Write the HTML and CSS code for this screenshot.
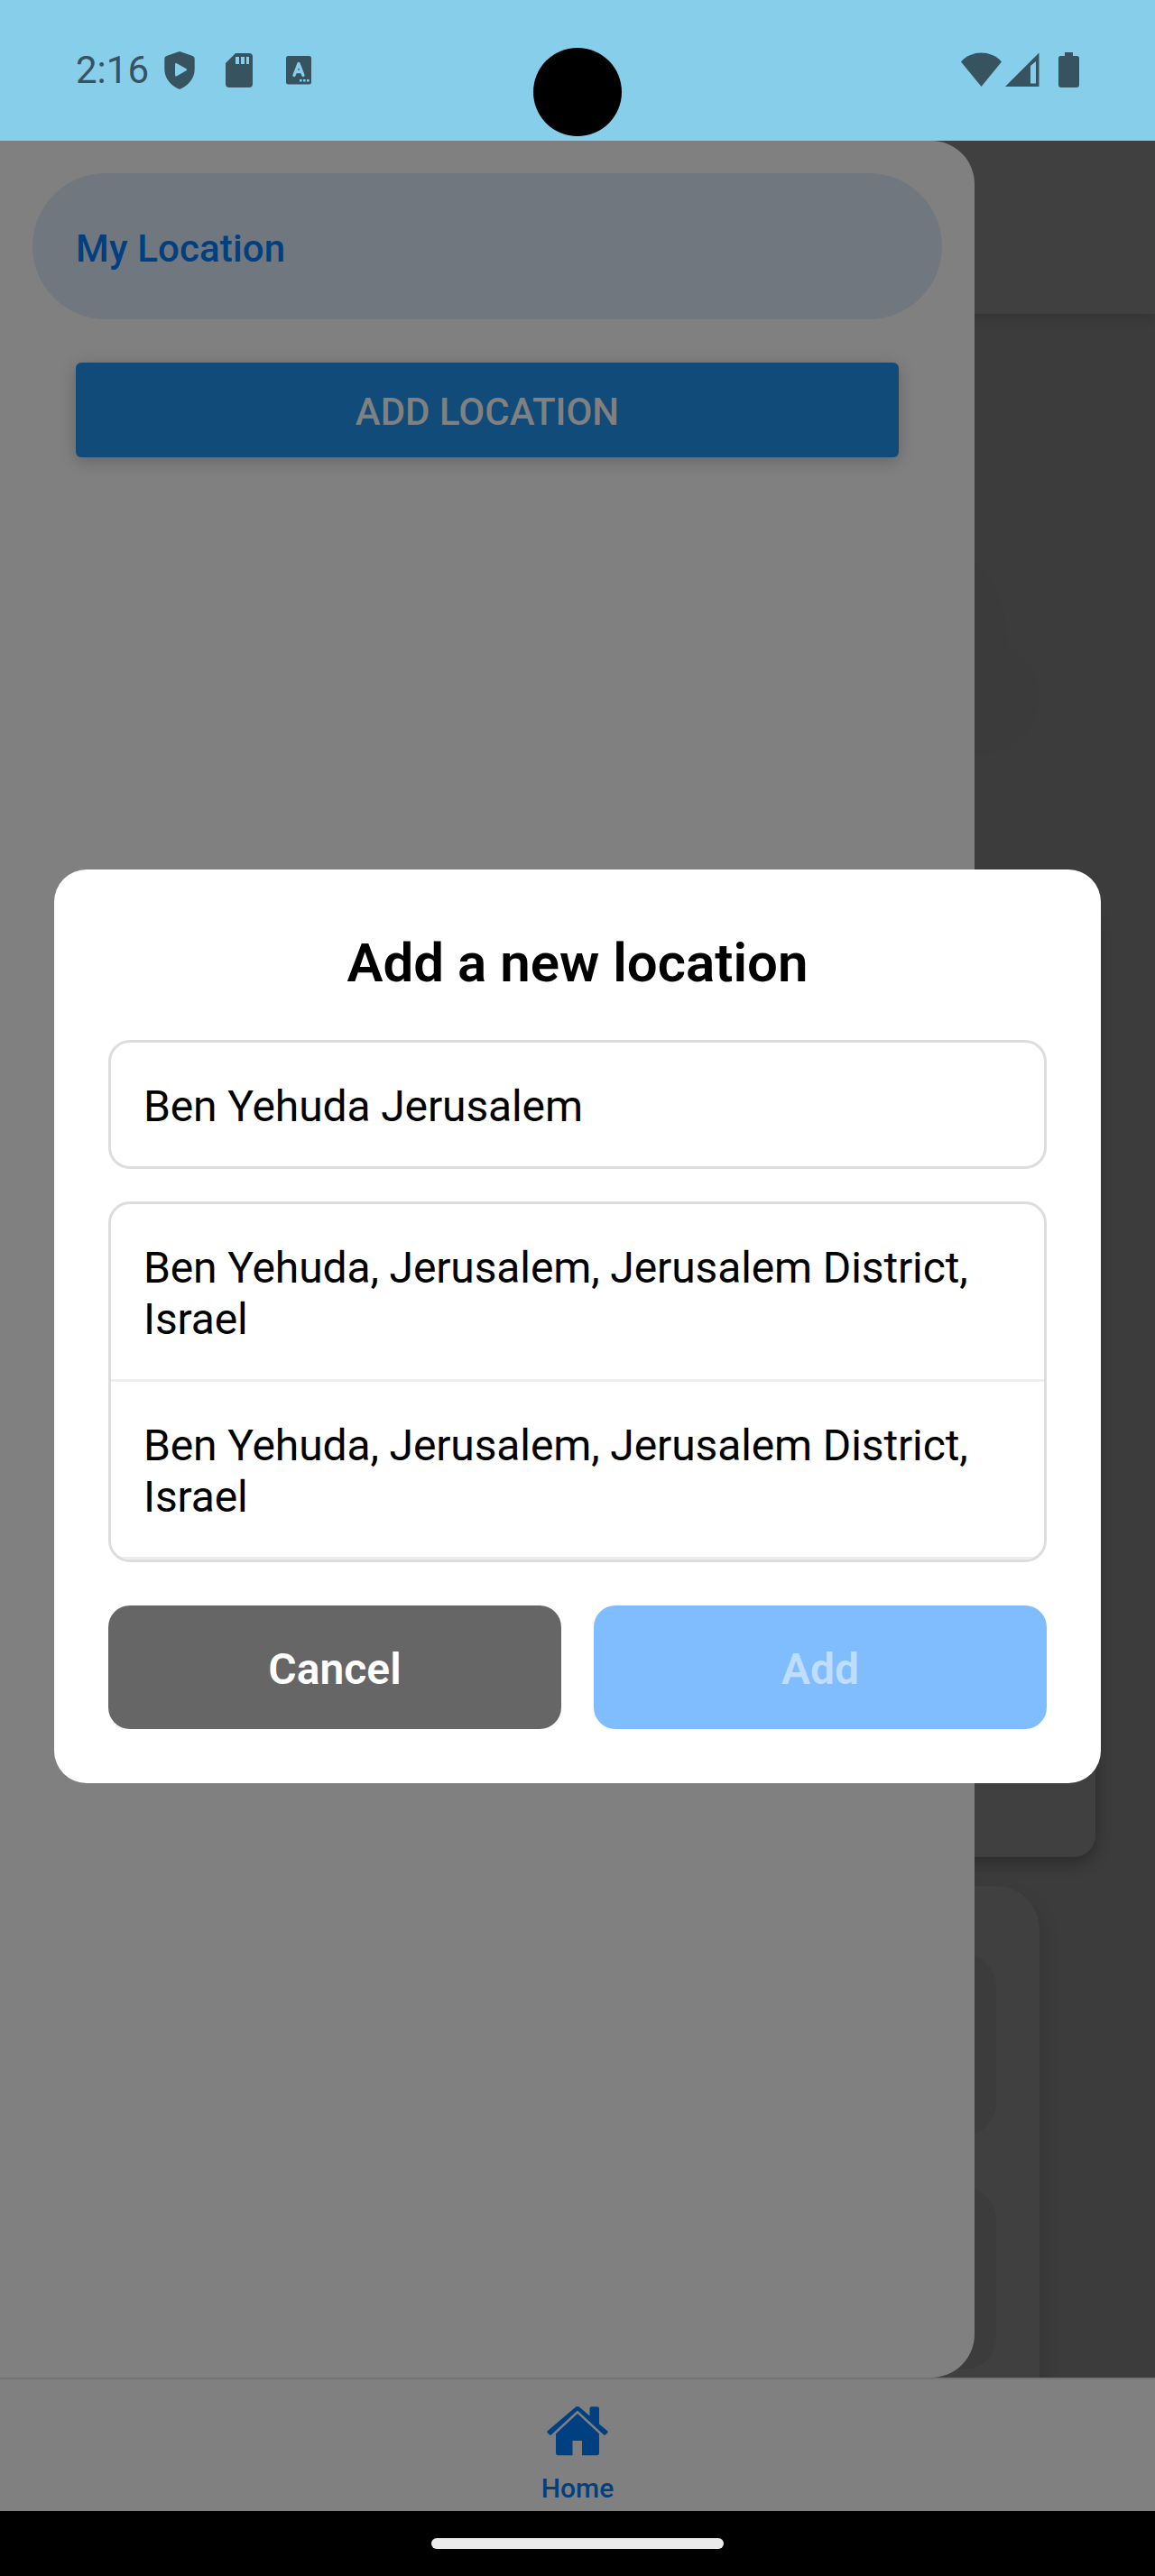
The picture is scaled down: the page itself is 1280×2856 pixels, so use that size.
FILE: index.html
```html
<!DOCTYPE html>
<html lang="en">
<head>
<meta charset="utf-8">
<title>Add a new location</title>
<link rel="stylesheet" href="styles.css">
</head>
<body>
<div class="phone">
  <header class="status">
    <div class="status-group">
      <span class="clock">2:16</span>
      <svg class="icon-shield" width="34" height="42" viewBox="0 0 34 42"><path fill="#37535f" fill-rule="evenodd" d="M17 0 31.5 5Q33.700 6 33.700 8V20C33.700 30 26 38.500 17 42C8 38.500.3 30 .3 20V8Q.3 6 2.500 5ZM12 14.500V26Q12 28.300 14 27.300L24.500 21.200Q26 20.200 24.500 19.200L14 13.200Q12 12.200 12 14.500Z"/></svg>
      <svg class="icon-sd" width="30" height="38" viewBox="0 0 30 38"><path fill="#37535f" fill-rule="evenodd" d="M11 0H26Q30 0 30 4V34Q30 38 26 38H4Q0 38 0 34V11ZM11 4V12H15V4ZM17 4V12H21V4ZM23 4V12H26V4Z"/></svg>
      <svg class="icon-a" width="28" height="32" viewBox="0 0 28 32"><rect width="28" height="31.500" rx="2.500" fill="#37535f"/><path d="M9 21.500 14 8.500 19 21.500M11 17.500H17" fill="none" stroke="#87ceeb" stroke-width="3.400" stroke-linecap="round" stroke-linejoin="round"/><path fill="#87ceeb" d="M15 26h2.600v2.500H15zM19 26h2.600v2.500H19zM23 26h2.600v2.500H23z"/></svg>
    </div>
    <div class="camera"></div>
    <div class="status-group">
      <svg class="icon-wifi" width="45" height="38" viewBox="0 0 45 38"><path fill="#37535f" d="M0 10.500C12 -2.700 33 -2.700 45 10.500L22.500 38Z"/></svg>
      <svg class="icon-signal" width="38" height="38" viewBox="0 0 38 38"><path fill="#37535f" fill-rule="evenodd" d="M37.500 .5V38H0ZM28 15V34.500H34V10Z"/></svg>
      <svg class="icon-battery" width="23" height="39" viewBox="0 0 23 39"><path fill="#37535f" d="M7 0H16V4H20.500Q23 4 23 6.500V36Q23 39 20 39H3Q0 39 0 36V6.500Q0 4 2.500 4H7Z"/></svg>
    </div>
  </header>

  <main class="screen">
    <div class="page">
      <div class="page-header"></div>
      <div class="bubble bubble-one"></div>
      <div class="bubble bubble-two"></div>
      <div class="card card-wide"></div>
      <div class="card card-list">
        <div class="card-item"></div>
        <div class="card-item"></div>
      </div>
    </div>

    <aside class="drawer">
      <div class="drawer-item">My Location</div>
      <div class="drawer-button">ADD LOCATION</div>
    </aside>

    <section class="modal">
      <h1 class="title">Add a new location</h1>
      <div class="field">Ben Yehuda Jerusalem</div>
      <div class="results">
        <div class="result">Ben Yehuda, Jerusalem, Jerusalem District, Israel</div>
        <div class="result">Ben Yehuda, Jerusalem, Jerusalem District, Israel</div>
      </div>
      <div class="actions">
        <div class="action cancel">Cancel</div>
        <div class="action add">Add</div>
      </div>
    </section>
  </main>

  <nav class="tabs">
    <svg class="icon-home" width="68" height="55" viewBox="0 0 68 55"><g fill="#004080"><path d="M31.500 1Q34 -.8 36.500 1L47.500 10.500V2Q47.500 .3 49.500 .3H56Q58 .3 58 2V19.500L67 27Q68.300 28.200 67 29.500L65 31.500Q64 32.300 62.800 31.300L34 4.500 5.200 31.300Q4 32.300 3 31.500L1 29.500Q-.3 28.200 1 27Z"/><path d="M34 8 58 30.300V51.500Q58 54.300 55.500 54.300H39V38H28.500V54.300H12.500Q10 54.300 10 51.500V30.300Z"/></g></svg>
    <span class="tab-label">Home</span>
  </nav>
  <footer class="gesture"><div class="gesture-bar"></div></footer>
</div>
</body>
</html>
```
FILE: styles.css
```css
* { box-sizing: border-box; }

body {
  margin: 0;
  font-family: Roboto, "Liberation Sans", sans-serif;
}

.phone {
  width: 1280px;
  height: 2856px;
  display: flex;
  flex-direction: column;
  overflow: hidden;
  background: #000;
}

.status {
  position: relative;
  height: 156px;
  flex: none;
  display: flex;
  justify-content: space-between;
  padding: 0 84px;
  background: #87ceeb;
}

.status-group {
  display: flex;
  align-items: flex-start;
}

.clock {
  margin-top: 53px;
  width: 98px;
  font-size: 42px;
  line-height: 49px;
  color: #37535f;
}

.icon-shield { margin-top: 57px; }
.icon-sd { margin: 59px 0 0 34px; }
.icon-a { margin: 62px 0 0 37px; }
.icon-wifi { margin-top: 58px; }
.icon-signal { margin: 58px 0 0 4px; }
.icon-battery { margin: 58px 0 0 21px; }

.camera {
  position: absolute;
  left: 591px;
  top: 53px;
  width: 98px;
  height: 98px;
  border-radius: 50%;
  background: #000;
}

.screen {
  position: relative;
  height: 2480px;
  flex: none;
  display: flex;
  overflow: hidden;
  background: #3c3c3c;
}

/* Dimmed page behind the drawer */
.page {
  position: absolute;
  inset: 0;
}

.page-header {
  height: 192px;
  background: #404040;
  box-shadow: 0 3px 14px rgba(0, 0, 0, .16);
}

.bubble {
  position: absolute;
  border-radius: 50%;
  background: #3b3b3b;
}

.bubble-one { left: 876px; top: 432px; width: 240px; height: 240px; }
.bubble-two { left: 1022px; top: 552px; width: 129px; height: 129px; }

.card {
  position: absolute;
  background: #404040;
}

.card-wide {
  left: 66px;
  top: 844px;
  width: 1148px;
  height: 1059px;
  border-radius: 24px;
  box-shadow: 0 6px 18px rgba(0, 0, 0, .3);
}

.card-list {
  left: 128px;
  top: 1935px;
  width: 1024px;
  height: 700px;
  padding: 75px 48px;
  border-radius: 48px 48px 0 0;
  box-shadow: 0 12px 22px rgba(0, 0, 0, .17);
}

.card-item {
  height: 202px;
  margin-bottom: 57px;
  border-radius: 36px;
  background: #3c3c3c;
}

.drawer {
  position: relative;
  width: 1080px;
  padding: 36px;
  border-radius: 0 48px 48px 0;
  background: #808080;
}

.drawer-item {
  height: 162px;
  padding: 59px 48px 0;
  border-radius: 81px;
  background: #70777f;
  color: #004080;
  font-size: 42px;
  line-height: 49px;
  font-weight: 500;
  letter-spacing: .15px;
}

.drawer-button {
  height: 105px;
  margin: 48px 48px 0;
  padding-top: 30px;
  border-radius: 6px;
  background: #114b79;
  color: #808080;
  text-align: center;
  font-size: 42px;
  line-height: 49px;
  font-weight: 500;
  box-shadow: 0 4px 18px rgba(0, 0, 0, .22);
}

.modal {
  position: absolute;
  left: 60px;
  top: 808px;
  width: 1160px;
  height: 1013px;
  padding: 60px;
  border-radius: 36px;
  background: #fff;
  color: #000;
}

.title {
  margin: 0 0 48px;
  padding-top: 7px;
  text-align: center;
  font-size: 60px;
  line-height: 74px;
  font-weight: 600;
}

.field {
  height: 143px;
  padding: 42px 36px 0;
  border: 3px solid #ddd;
  border-radius: 24px;
  font-size: 48px;
  line-height: 57px;
  letter-spacing: -.12px;
}

.results {
  height: 400px;
  margin-top: 36px;
  border: 3px solid #ddd;
  border-radius: 24px;
  overflow: hidden;
}

.result {
  height: 197px;
  padding: 42px 36px 0;
  border-bottom: 3px solid #eee;
  font-size: 48px;
  line-height: 57px;
  letter-spacing: -.12px;
}

.actions {
  display: flex;
  gap: 36px;
  margin-top: 48px;
}

.action {
  flex: 1;
  height: 137px;
  padding-top: 42px;
  border-radius: 24px;
  text-align: center;
  font-size: 48px;
  line-height: 57px;
  font-weight: 600;
}

.cancel { background: #666; color: #fff; }
.add { background: #80bdff; color: #bfdeff; }

.tabs {
  height: 148px;
  flex: none;
  display: flex;
  flex-direction: column;
  align-items: center;
  padding-top: 30px;
  border-top: 2px solid #747474;
  background: #808080;
}

.tab-label {
  margin-top: 18px;
  color: #004080;
  font-size: 30px;
  line-height: 35px;
  font-weight: 500;
}

.gesture {
  height: 72px;
  display: flex;
  justify-content: center;
  padding-top: 30px;
  background: #000;
}

.gesture-bar {
  width: 324px;
  height: 12px;
  border-radius: 6px;
  background: #ebebeb;
}
```
